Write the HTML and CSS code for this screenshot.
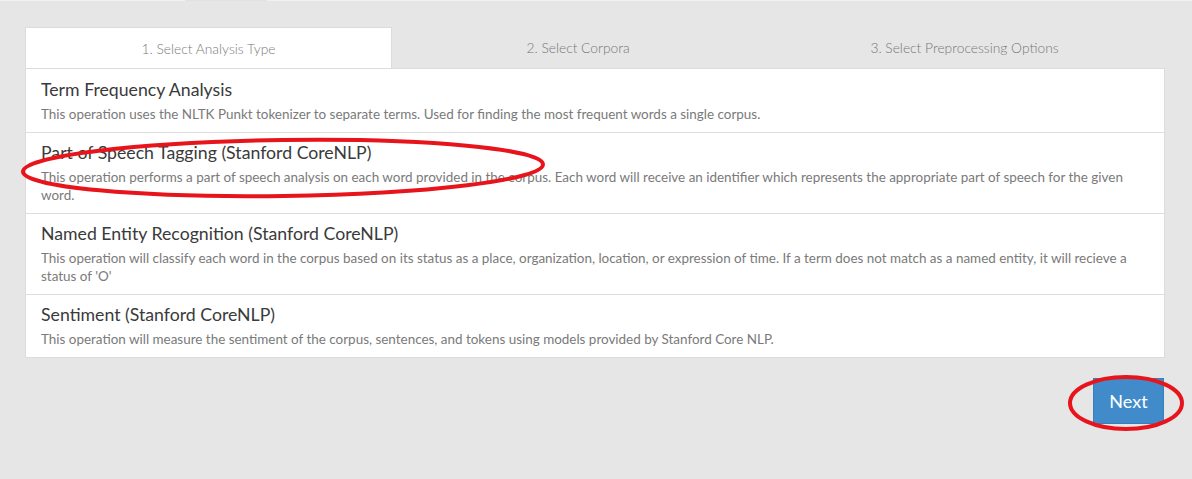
FILE: index.html
```html
<!DOCTYPE html>
<html>
<head>
<meta charset="utf-8">
<link rel="stylesheet" href="styles.css">
</head>
<body>
<div class="topstrip"><span class="seg-a"></span><span class="seg-b"></span><span class="seg-c"></span></div>
<div class="wrap">
  <div class="tabs">
    <div class="tab tab1 active">1. Select Analysis Type</div>
    <div class="tab tab2">2. Select Corpora</div>
    <div class="tab tab3">3. Select Preprocessing Options</div>
  </div>
  <div class="panel">
    <div class="item">
      <h4 class="item-title">Term Frequency Analysis</h4>
      <p class="item-text">This operation uses the NLTK Punkt tokenizer to separate terms. Used for finding the most frequent words a single corpus.</p>
    </div>
    <div class="item">
      <h4 class="item-title">Part of Speech Tagging (Stanford CoreNLP)</h4>
      <p class="item-text">This operation performs a part of speech analysis on each word provided in the corpus. Each word will receive an identifier which represents the appropriate part of speech for the given word.</p>
    </div>
    <div class="item">
      <h4 class="item-title">Named Entity Recognition (Stanford CoreNLP)</h4>
      <p class="item-text">This operation will classify each word in the corpus based on its status as a place, organization, location, or expression of time. If a term does not match as a named entity, it will recieve a status of 'O'</p>
    </div>
    <div class="item">
      <h4 class="item-title">Sentiment (Stanford CoreNLP)</h4>
      <p class="item-text">This operation will measure the sentiment of the corpus, sentences, and tokens using models provided by Stanford Core NLP.</p>
    </div>
  </div>
  <div class="actions">
    <button class="btn-next">Next</button>
  </div>
</div>
<svg class="mark mark-pos" width="540" height="70" viewBox="0 0 540 70"><ellipse cx="268" cy="35" rx="260" ry="28" transform="rotate(-0.8 268 35)" fill="none" stroke="#e8141c" stroke-width="4"/></svg>
<svg class="mark mark-next" width="124" height="62" viewBox="0 0 124 62"><ellipse cx="62" cy="31" rx="56" ry="26" fill="none" stroke="#e8141c" stroke-width="4"/></svg>
</body>
</html>
```
FILE: styles.css
```css
html, body {
  margin: 0;
  padding: 0;
  background: #e6e6e6;
  font-family: Lato, "Open Sans", sans-serif;
  width: 1192px;
  height: 479px;
  overflow: hidden;
  position: relative;
}
.topstrip {
  display: flex;
  height: 1px;
}
.seg-a { width: 185px; background: #f1f1f1; }
.seg-b { width: 82px; background: #e2e2e2; }
.seg-c { flex: 1; background: #f1f1f1; }
.wrap {
  padding: 26px 0 0 25px;
  width: 1140px;
}
.tabs {
  display: flex;
  height: 41px;
}
.tab {
  display: flex;
  align-items: center;
  justify-content: center;
  font-size: 13.8px;
  font-weight: 300;
  color: #777;
  box-sizing: border-box;
}
.tab1 { width: 367px; }
.tab2 { width: 372px; }
.tab3 { flex: 1; }
.tab.active {
  background: #fff;
  border: 1px solid #dcdcdc;
  border-bottom: none;
  color: #7a7a7a;
}
.panel {
  background: #fff;
  border: 1px solid #dcdcdc;
  box-sizing: border-box;
}
.item {
  padding: 10px 15px 9px;
  border-top: 1px solid #dedede;
}
.item:first-child { border-top-color: #fff; }
.item-title {
  margin: 0 0 5px;
  font-size: 17.7px;
  font-weight: 400;
  line-height: 20px;
  color: #3a3a3a;
}
.item-text {
  margin: 0;
  font-size: 13.45px;
  line-height: 18px;
  color: #7a7a7a;
  font-weight: 400;
}
.actions {
  display: flex;
  justify-content: flex-end;
  margin-top: 20px;
}
.btn-next {
  width: 71px;
  height: 46px;
  border: 1px solid #3a7fbd;
  background: #428bca;
  color: #fff;
  font-family: Lato, sans-serif;
  font-size: 18px;
  font-weight: 400;
  padding: 0;
  margin-right: 1px;
}
.mark {
  position: absolute;
}
.mark-pos { left: 15px; top: 133px; }
.mark-next { left: 1064px; top: 372px; }
```
